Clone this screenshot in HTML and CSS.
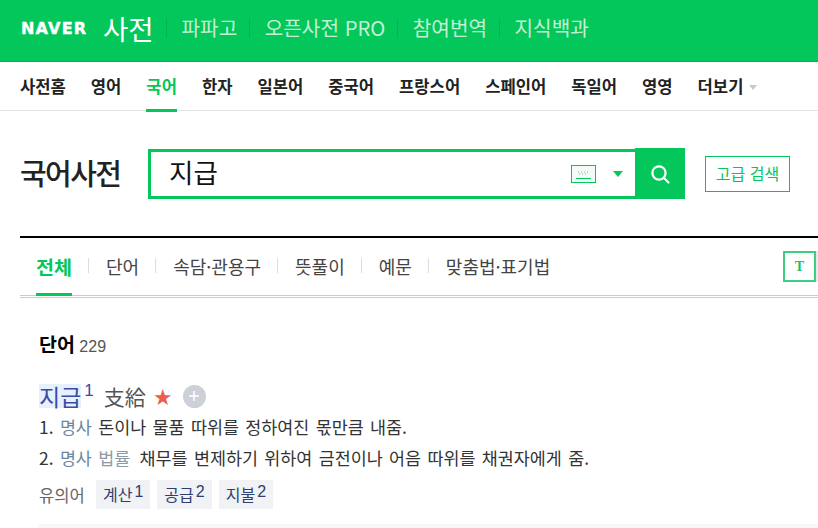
FILE: index.html
```html
<!DOCTYPE html>
<html lang="ko">
<head>
<meta charset="utf-8">
<title>네이버 국어사전</title>
<link rel="stylesheet" href="styles.css">
</head>
<body>
<header class="top">
  <span class="logo">NAVER</span>
  <span class="dict">사전</span>
  <nav class="services">
    <a>파파고</a><a>오픈사전 PRO</a><a>참여번역</a><a>지식백과</a>
  </nav>
</header>
<nav class="gnb">
  <a>사전홈</a><a>영어</a><a class="on">국어</a><a>한자</a><a>일본어</a><a>중국어</a><a>프랑스어</a><a>스페인어</a><a>독일어</a><a>영영</a><a class="more">더보기<i class="tri"></i></a>
</nav>
<section class="search">
  <h1>국어사전</h1>
  <div class="box">
    <span class="query">지급</span>
    <span class="kbd"><svg width="25" height="18" viewBox="0 0 25 18"><rect x=".5" y=".5" width="24" height="17" fill="#f2fbf5" stroke="#03c75a"/><path d="M7 7h1m2 0h1m2 0h1m2 0h1M8 9h1m2 0h1m2 0h1" stroke="#8fa89a"/><path d="M5 13.5h15" stroke="#03c75a"/></svg></span>
    <i class="caret"></i>
    <span class="go"><svg width="22" height="22" viewBox="0 0 22 22" fill="none" stroke="#fff" stroke-width="2.2"><circle cx="10" cy="10" r="6.6"/><path d="M15 15l4.5 4.5" stroke-linecap="round"/></svg></span>
  </div>
  <a class="adv">고급 검색</a>
</section>
<nav class="tabs">
  <a class="on">전체</a><a>단어</a><a>속담·관용구</a><a>뜻풀이</a><a>예문</a><a>맞춤법·표기법</a>
  <span class="t">T</span><span class="t-next"></span>
</nav>
<main class="result">
  <h2>단어 <span class="count">229</span></h2>
  <div class="entry">
    <span class="word">지급</span><sup class="sup">1</sup>
    <span class="hanja">支給</span>
    <span class="star">★</span>
    <span class="plus"><svg width="12" height="12" viewBox="0 0 12 12"><path d="M6 1v10M1 6h10" stroke="#fff" stroke-width="1.5"/></svg></span>
  </div>
  <p class="def">1. <span class="pos">명사</span> 돈이나 물품 따위를 정하여진 몫만큼 내줌.</p>
  <p class="def">2. <span class="pos">명사</span> <span class="law">법률</span> 채무를 변제하기 위하여 금전이나 어음 따위를 채권자에게 줌.</p>
  <div class="syn">
    <span class="lab">유의어</span>
    <a>계산<sup>1</sup></a><a>공급<sup>2</sup></a><a>지불<sup>2</sup></a>
  </div>
  <div class="next"></div>
</main>
</body>
</html>
```
FILE: styles.css
```css
* { box-sizing: border-box; }
html, body { margin: 0; height: 528px; overflow: hidden; background: #fff; }
body { font-family: "Noto Sans CJK KR", "Liberation Sans", sans-serif; color: #222; }
a { display: block; }

.top { height: 62px; background: #03c75a; border-bottom: 1px solid #02b350; display: flex; align-items: center; padding: 0 0 5px 21px; color: #fff; }
.logo { font-family: "DejaVu Sans", sans-serif; font-weight: 700; font-size: 16px; width: 66px; letter-spacing: 1.2px; -webkit-text-stroke: .4px #fff; white-space: nowrap; }
.dict { font-size: 27.5px; line-height: 30px; margin-left: 16px; width: 63px; white-space: nowrap; }
.services { display: flex; }
.services a { font-size: 20.2px; line-height: 26px; color: #c4f0d5; padding: 0 12px 0 15.5px; position: relative; white-space: nowrap; }
.services a::before { content: ""; position: absolute; left: 0; top: 4px; width: 1px; height: 19px; background: #02b350; }

.gnb { height: 49px; border-bottom: 1px solid #e4e4e4; display: flex; padding-left: 20px; }
.gnb a { font-size: 16.6px; font-weight: 700; line-height: 48px; margin-right: 25px; height: 50px; white-space: nowrap; }
.gnb a.on { color: #03c75a; border-bottom: 3px solid #03c75a; }
.tri { display: inline-block; border: 4px solid transparent; border-top: 5px solid #c8c8c8; border-bottom: 0; margin-left: 6px; vertical-align: 3px; }

.search { display: flex; height: 125px; padding: 37px 0 0 20px; }
h1 { margin: 0; font-size: 29px; font-weight: 500; line-height: 49px; width: 128px; letter-spacing: -1.6px; color: #222; }
.box { width: 537px; height: 50px; margin-top: 1px; display: flex; align-items: center; border: 3px solid #03c75a; border-right: 0; padding-left: 18px; }
.query { font-size: 26.5px; line-height: 40px; flex: 1; color: #111; padding-bottom: 4px; }
.kbd { display: flex; margin-right: 17px; }
.caret { border: 5px solid transparent; border-top: 6px solid #03c75a; border-bottom: 0; margin-right: 12px; }
.go { width: 50px; height: 51px; margin: -4px 0 -3px; background: #03c75a; display: flex; align-items: center; justify-content: center; }
.adv { margin: 8px 0 0 20px; width: 85px; height: 36px; border: 1px solid #03c75a; color: #03c75a; font-size: 16px; line-height: 33px; text-align: center; white-space: nowrap; }

.tabs { margin-left: 20px; height: 62px; border-top: 2px solid #000; border-bottom: 3px double #ccc; display: flex; position: relative; padding-left: 16px; }
.tabs a { font-size: 18px; line-height: 57px; height: 58px; color: #444; margin-right: 34px; position: relative; white-space: nowrap; }
.tabs a + a::before { content: ""; position: absolute; left: -18px; top: 20px; width: 1px; height: 15px; background: #ddd; }
.tabs a.on { color: #03c75a; font-weight: 700; font-size: 19.6px; border-bottom: 3px solid #03c75a; }
.t { position: absolute; left: 763px; top: 13px; width: 33px; height: 31px; border: 2px solid #3ccf82; color: #10c468; font-family: "Liberation Serif", serif; font-weight: 700; font-size: 14px; line-height: 27px; text-align: center; }
.t-next { position: absolute; left: 796px; top: 13px; width: 2px; height: 31px; background: #e8e8e8; }

.result { padding: 0 0 0 39px; }
h2 { margin: 32px 0 0; height: 28px; font-size: 19.5px; line-height: 28px; font-weight: 700; color: #000; }
.count { font-size: 16px; font-weight: 400; color: #555; font-family: "Liberation Sans", sans-serif; margin-left: -1px; }
.entry { margin-top: 23px; height: 30px; display: flex; align-items: center; }
.word { font-size: 23px; color: #3c4aa8; background: #e5f2fd; height: 24px; display: flex; align-items: center; }
.sup { font-family: "Liberation Sans", sans-serif; font-size: 17px; line-height: 15px; color: #3c4aa8; margin: -12px 0 0 3px; }
.hanja { font-size: 21px; color: #555; margin-left: 10px; }
.star { color: #e8604c; font-size: 18px; line-height: 20px; margin-left: 8px; }
.plus { width: 23px; height: 23px; border-radius: 50%; background: #ccd0d8; margin-left: 11px; display: flex; align-items: center; justify-content: center; }
.def { margin: 0; font-size: 17.4px; line-height: 31px; height: 31px; color: #333; word-spacing: 1.5px; white-space: nowrap; }
.pos { color: #6d86a0; }
.law { color: #8c9aa8; margin-right: 3px; }
.syn { display: flex; align-items: center; margin-top: 7px; height: 29px; }
.lab { font-size: 16.6px; color: #666; width: 57px; }
.syn a { height: 29px; background: #f0f2f5; color: #2f3f70; font-size: 16px; line-height: 29px; padding: 0 7px; margin-right: 7px; white-space: nowrap; }
.syn sup { font-family: "Liberation Sans", sans-serif; font-size: 16px; line-height: 0; margin-left: 2px; vertical-align: 4px; }
.next { margin: 15px 0 0 -1px; height: 10px; background: #f6f7f7; border-radius: 4px 0 0 0; }
```
